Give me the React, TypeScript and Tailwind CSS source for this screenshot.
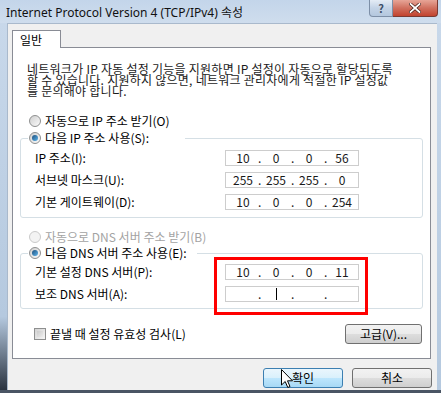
import { Fragment } from 'react'

const ko = "font-['Noto_Sans_CJK_KR','Noto_Sans',sans-serif]"

function Radio ({ checked, disabled }: { checked?: boolean, disabled?: boolean }) {
  return (
    <span
      className={`flex h-[12px] w-[12px] shrink-0 items-center justify-center rounded-full border ${
        disabled
          ? 'border-[#cacaca] bg-[#f3f3f3]'
          : 'border-[#8e8f8f] bg-[linear-gradient(135deg,#cfcfcf,#fbfbfb)]'
      }`}
    >
      {checked && (
        <span className="h-[6px] w-[6px] rounded-full bg-[linear-gradient(135deg,#1d4e7c,#5cb4ec)]" />
      )}
    </span>
  )
}

function IpField ({ parts, caret }: { parts: string[], caret?: number }) {
  return (
    <div className="flex h-[16px] w-[134px] items-center border border-[#cdcdcd] bg-white pl-[2px] text-[12px] leading-[14px] text-[#1a1a1a]">
      {parts.map((p, i) => (
        <Fragment key={i}>
          {i > 0 && <span className="w-[3px] text-center">.</span>}
          <span className="flex w-[30px] items-center justify-center">
            {p}
            {caret === i && <span className="h-[12px] w-px bg-black" />}
          </span>
        </Fragment>
      ))}
    </div>
  )
}

function Row ({ label, parts, caret }: { label: string, parts: string[], caret?: number }) {
  return (
    <div className="flex h-[16px] items-center justify-between">
      <span>{label}</span>
      <IpField parts={parts} caret={caret} />
    </div>
  )
}

export default function App () {
  return (
    <div className={`relative flex h-[393px] w-[441px] flex-col overflow-hidden bg-[#c8d8ea] ${ko} text-[12px] text-black`}>
      {/* title bar */}
      <div className="flex h-[23px] shrink-0 items-start bg-[linear-gradient(#c3d5ea,#cfdded)]">
        <div className="flex-1 pl-[6px] pt-[4px] font-['Noto_Sans',sans-serif] text-[12px] leading-[16px] text-[#111]">
          Internet Protocol Version 4 (TCP/IPv4) <span className={ko}>속성</span>
        </div>
        <div className="mr-[3px] flex h-[17px]">
          <div className="flex w-[24px] items-center justify-center rounded-bl-[4px] border border-t-0 border-[#7d8fa7] bg-[linear-gradient(#e4ecf5,#c3d3e6_50%,#b4c7de)] text-[11px] font-bold leading-none text-[#3d4f67]">
            ?
          </div>
          <div className="flex w-[45px] items-center justify-center rounded-br-[4px] border border-l-0 border-t-0 border-[#7a3a33] bg-[linear-gradient(#e7a597,#d0705f_50%,#c2432f)]">
            <svg width="12" height="10" viewBox="0 0 12 10">
              <path d="M1.5 1 L10.5 9 M10.5 1 L1.5 9" stroke="#3f1a14" strokeWidth="3.2" strokeLinecap="square" />
              <path d="M1.5 1 L10.5 9 M10.5 1 L1.5 9" stroke="#ffffff" strokeWidth="1.8" strokeLinecap="square" />
            </svg>
          </div>
        </div>
      </div>

      <div className="flex flex-1">
        <div className="w-[7px] bg-[linear-gradient(#c8d8ea,#b5c9df_80%,#2a3340)]" />
        <div className="flex flex-1 flex-col border-l border-t border-[#a9b9cc] bg-[#f0f0f0] pl-[4px] pr-[6px] pt-[6px]">
          {/* tab */}
          <div className="relative z-10 -mb-px flex h-[18px] w-[49px] items-center border border-b-0 border-[#898c95] bg-white pl-[7px] text-[12px]">
            일반
          </div>
          {/* panel */}
          <div className="relative flex h-[312px] flex-col border border-[#898c95] bg-white px-[7px] pt-[15px]">
            <p className="pl-[7px] leading-[11px] tracking-[0.25px] text-[#1a1a1a]">
              네트워크가 IP 자동 설정 기능을 지원하면 IP 설정이 자동으로 할당되도록
              <br />
              할 수 있습니다. 지원하지 않으면, 네트워크 관리자에게 적절한 IP 설정값
              <br />
              를 문의해야 합니다.
            </p>

            <div className="mt-[18px] flex h-[14px] items-center gap-[4px] pl-[9px]">
              <Radio />
              <span>자동으로 IP 주소 받기(O)</span>
            </div>

            <fieldset className="mt-[3px] flex flex-col gap-[6px] rounded-[3px] border border-[#d5dfe5] pb-[7px] pl-[14px] pr-[63px] pt-[5px]">
              <legend className="-ml-[7px] pl-[1px] pr-[36px]">
                <span className="flex h-[14px] items-center gap-[4px]">
                  <Radio checked />
                  <span>다음 IP 주소 사용(S):</span>
                </span>
              </legend>
              <Row label="IP 주소(I):" parts={['10', '0', '0', '56']} />
              <Row label="서브넷 마스크(U):" parts={['255', '255', '255', '0']} />
              <Row label="기본 게이트웨이(D):" parts={['10', '0', '0', '254']} />
            </fieldset>

            <div className="mt-[12px] flex h-[14px] items-center gap-[4px] pl-[9px] text-[#a3a3a3]">
              <Radio disabled />
              <span>자동으로 DNS 서버 주소 받기(B)</span>
            </div>

            <fieldset className="mt-[2px] flex flex-col gap-[6px] rounded-[3px] border border-[#d5dfe5] pb-[6px] pl-[14px] pr-[63px] pt-[4px]">
              <legend className="-ml-[7px] pl-[1px] pr-[10px]">
                <span className="flex h-[14px] items-center gap-[4px]">
                  <Radio checked />
                  <span>다음 DNS 서버 주소 사용(E):</span>
                </span>
              </legend>
              <Row label="기본 설정 DNS 서버(P):" parts={['10', '0', '0', '11']} />
              <Row label="보조 DNS 서버(A):" parts={['', '', '', '']} caret={1} />
            </fieldset>

            <div className="mt-[15px] flex h-[20px] items-center justify-between pl-[14px] pr-[1px]">
              <div className="flex items-center gap-[4px]">
                <span className="h-[12px] w-[12px] border border-[#8e8f8f] bg-[linear-gradient(135deg,#d2d2d2,#f6f6f6)] p-[2px]">
                  <span className="block h-full w-full bg-[linear-gradient(135deg,#cbcbcb,#ececec)]" />
                </span>
                <span>끝낼 때 설정 유효성 검사(L)</span>
              </div>
              <button className="h-[20px] w-[77px] rounded-[3px] border border-[#707070] bg-[linear-gradient(#f2f2f2_0%,#ebebeb_50%,#dddddd_50%,#cfcfcf_100%)] text-[12px] leading-none">
                고급(V)...
              </button>
            </div>

            {/* highlight annotation */}
            <div className="pointer-events-none absolute left-[201px] top-[209px] h-[58px] w-[154px] border-[3px] border-[#ff0000]" />
          </div>

          <div className="-mr-[1px] mt-[9px] flex justify-end gap-[9px]">
            <button className="h-[20px] w-[80px] rounded-[3px] border border-[#3c7fb1] bg-[linear-gradient(#eaf6fd_0%,#d9f0fc_50%,#bee6fd_50%,#a7d9f5_100%)] text-[12px] leading-none">
              확인
            </button>
            <button className="h-[20px] w-[80px] rounded-[3px] border border-[#707070] bg-[linear-gradient(#f2f2f2_0%,#ebebeb_50%,#dddddd_50%,#cfcfcf_100%)] text-[12px] leading-none">
              취소
            </button>
          </div>
        </div>
        <div className="w-[4px] bg-[linear-gradient(#c8d8ea,#b5c9df)]" />
      </div>
      <div className="h-[3px] shrink-0 bg-[#4a5564]" />

      {/* mouse pointer */}
      <svg className="absolute left-[281px] top-[369px]" width="13" height="20" viewBox="0 0 13 20">
        <path d="M0.5 0.5 L0.5 16 L4.2 12.5 L6.8 18.5 L9 17.5 L6.5 11.8 L11.5 11.8 Z" fill="#ffffff" stroke="#000000" strokeWidth="1" strokeLinejoin="miter" />
      </svg>
    </div>
  )
}
